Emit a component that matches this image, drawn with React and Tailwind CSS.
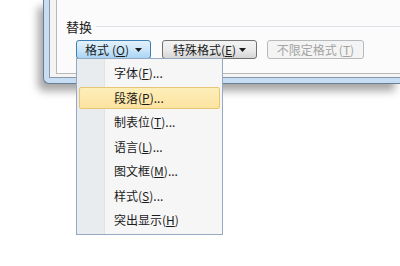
const FONT = '"Microsoft YaHei", "Noto Sans CJK SC", "Liberation Sans", sans-serif';

const MENU_ITEMS = [
  { label: "字体", key: "F", dots: true },
  { label: "段落", key: "P", dots: true, active: true },
  { label: "制表位", key: "T", dots: true },
  { label: "语言", key: "L", dots: true },
  { label: "图文框", key: "M", dots: true },
  { label: "样式", key: "S", dots: true },
  { label: "突出显示", key: "H", dots: false },
];

function Arrow({ color = "#1e1e1e" }) {
  return (
    <svg width="7" height="4" viewBox="0 0 7 4" className="ml-[3px]">
      <path d="M0 0 H7 L3.5 4 Z" fill={color} />
    </svg>
  );
}

export default function App() {
  return (
    <div
      className="relative w-[400px] h-[266px] bg-white overflow-hidden text-[12px] text-[#1b1b1b]"
      style={{ fontFamily: FONT }}
    >
      {/* window frame */}
      <div className="ml-[43px] h-[84px] border-l border-b border-[#6d7d90] bg-[#c6ddf4] rounded-bl-[6px] pl-[5px] pb-[5px] shadow-[-5px_7px_9px_rgba(0,0,0,0.35)]">
        <div className="h-full border-l border-b border-[#8b97a4] bg-[#f4f4f4] pl-[6px] pb-[3px]">
          <div className="h-full border-l border-b border-[#b9b9b9] bg-[#fbfbfb] pl-[9px] pt-[18px]">
            {/* group label */}
            <div className="flex items-center h-[16px]">
              <span className="leading-none text-[13px]">替换</span>
              <div className="flex-1 ml-[4px] h-px bg-[#dde3e8]" />
            </div>
            {/* buttons */}
            <div className="flex items-center mt-[6px] ml-[10px]">
              <div className="w-[75px] h-[19px] flex items-center justify-center rounded-[3px] border border-[#3c7fb1] bg-[linear-gradient(#e3f1fc,#cbe6fa_50%,#a9d4f4)] leading-none">
                <span>格式</span>
                <span className="ml-[3px]">(<span className="underline">O</span>)</span>
                <span className="ml-[3px]"><Arrow /></span>
              </div>
              <div className="ml-[11px] w-[95px] h-[19px] flex items-center justify-center rounded-[3px] border border-[#707070] bg-[linear-gradient(#f3f3f3,#ebebeb_50%,#d5d5d5)] leading-none">
                <span>特殊格式</span>
                <span>(<span className="underline">E</span>)</span>
                <Arrow />
              </div>
              <div className="ml-[10px] w-[97px] h-[19px] flex items-center justify-center rounded-[3px] border border-[#b6babd] bg-[#f4f4f4] text-[#a3a3a3] leading-none">
                <span>不限定格式</span>
                <span className="ml-[2px]">(<span className="underline">T</span>)</span>
              </div>
            </div>
          </div>
        </div>
      </div>

      {/* dropdown menu */}
      <div className="absolute left-[76px] top-[58px] w-[147px] border border-[#97a8c3] bg-[#f6f6f6] pt-[2px] pb-[1px]">
        <div className="absolute left-0 top-0 bottom-0 w-[28px] bg-[#e9ecee] border-r border-[#e2e3e3]" />
        <div className="relative flex flex-col">
          {MENU_ITEMS.map((it) => (
            <div key={it.label} className="h-[24.5px] py-[1px] px-[2px]">
              <div
                className={
                  "h-full flex items-center pl-[34px] rounded-[2px] " +
                  (it.active
                    ? "border border-[#e8c774] bg-[linear-gradient(#fdeeb9,#fde3a0)]"
                    : "border border-transparent")
                }
              >
                <span className="leading-none">
                  {it.label}(<span className="underline">{it.key}</span>){it.dots ? "..." : ""}
                </span>
              </div>
            </div>
          ))}
        </div>
      </div>
    </div>
  );
}
